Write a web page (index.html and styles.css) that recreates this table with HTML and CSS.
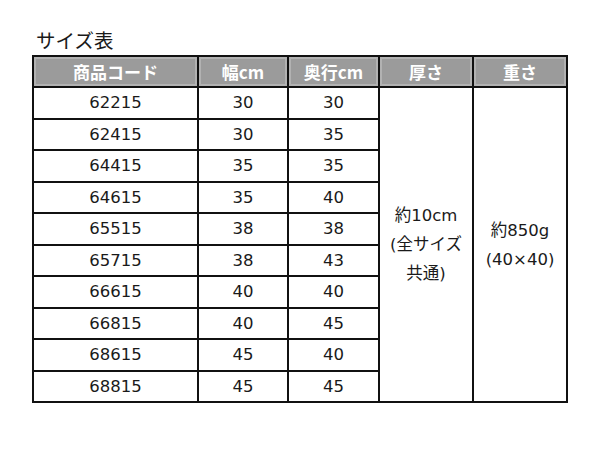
FILE: index.html
```html
<!DOCTYPE html>
<html lang="ja">
<head>
<meta charset="utf-8">
<link rel="stylesheet" href="styles.css">
</head>
<body>
<div class="title">サイズ表</div>
<table class="size-table">
  <colgroup>
    <col class="c1"><col class="c2"><col class="c3"><col class="c4"><col class="c5">
  </colgroup>
  <thead>
    <tr><th>商品コード</th><th>幅cm</th><th>奥行cm</th><th>厚さ</th><th>重さ</th></tr>
  </thead>
  <tbody>
    <tr><td>62215</td><td>30</td><td>30</td><td class="merged" rowspan="10">約10cm<br>(全サイズ<br>共通)</td><td class="merged" rowspan="10">約850g<br>(40×40)</td></tr>
    <tr><td>62415</td><td>30</td><td>35</td></tr>
    <tr><td>64415</td><td>35</td><td>35</td></tr>
    <tr><td>64615</td><td>35</td><td>40</td></tr>
    <tr><td>65515</td><td>38</td><td>38</td></tr>
    <tr><td>65715</td><td>38</td><td>43</td></tr>
    <tr><td>66615</td><td>40</td><td>40</td></tr>
    <tr><td>66815</td><td>40</td><td>45</td></tr>
    <tr><td>68615</td><td>45</td><td>40</td></tr>
    <tr><td>68815</td><td>45</td><td>45</td></tr>
  </tbody>
</table>
</body>
</html>
```

FILE: styles.css
```css
html, body {
  margin: 0;
  padding: 0;
  background: #ffffff;
}
body {
  font-family: "DejaVu Sans", "Noto Sans CJK JP", sans-serif;
  color: #1a1a1a;
}
.title {
  padding: 28px 0 0 36px;
  font-size: 19.5px;
  line-height: 24px;
  height: 27px;
  font-family: "Noto Sans CJK JP", sans-serif;
}
.size-table {
  margin-left: 32px;
  border-collapse: collapse;
  table-layout: fixed;
  width: 534px;
}
.c1 { width: 165px; }
.c2 { width: 90px; }
.c3 { width: 91px; }
.c4 { width: 94px; }
.c5 { width: 94px; }
.size-table th,
.size-table td {
  border: 2px solid #111;
  text-align: center;
  padding: 0;
}
.size-table th {
  height: 29px;
  background: #9b9b9b;
  color: #ffffff;
  font-family: "Noto Sans CJK JP", sans-serif;
  font-weight: bold;
  font-size: 17px;
  box-shadow: inset 0 0 0 2px #b2b2b2;
}
.size-table td {
  height: 29.5px;
  font-size: 16.5px;
}
.size-table td.merged {
  line-height: 29px;
  font-size: 16.5px;
}
```
